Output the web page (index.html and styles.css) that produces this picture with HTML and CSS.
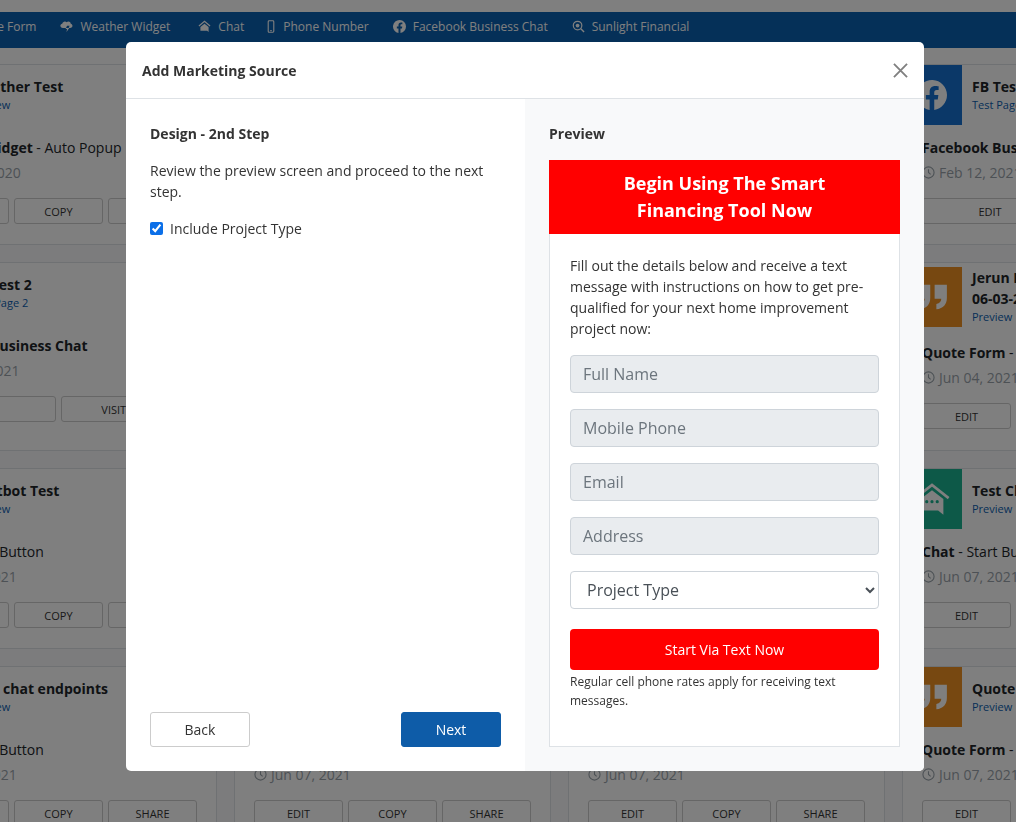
FILE: index.html
```html
<!DOCTYPE html>
<html lang="en">
<head>
    <meta charset="UTF-8">
    <title>Add Marketing Source</title>
    <link rel="stylesheet" href="styles.css">
</head>
<body>
    <svg class="sprite">
        <symbol id="clock" viewBox="0 0 14 14"><circle cx="7" cy="7" r="6" fill="none" stroke="currentColor" stroke-width="1.200"/><path fill="none" stroke="currentColor" stroke-width="1.200" d="M7 3.500V7l2.300 2"/></symbol>
        <symbol id="fb" viewBox="0 0 24 24"><path fill="currentColor" d="M24 12a12 12 0 1 0-13.900 11.900v-8.400H7.100V12h3V9.400c0-3 1.800-4.700 4.500-4.700 1.300 0 2.700.2 2.700.2v3h-1.500c-1.500 0-2 .9-2 1.900V12h3.300l-.5 3.500h-2.800v8.400A12 12 0 0 0 24 12z"/></symbol>
        <symbol id="quote" viewBox="0 0 24 24"><path fill="#fff" d="M4 5h7v7.500c0 3.500-2 6-6 6.500v-3c2 -.4 2.800-1.500 2.800-3H4zm9.500 0h7v7.500c0 3.500-2 6-6 6.500v-3c2-.4 2.800-1.500 2.800-3h-3.800z"/></symbol>
        <symbol id="chat" viewBox="0 0 24 24"><path fill="none" stroke="#fff" stroke-width="1.500" d="M2.500 11.500 12 4l9.500 7.500"/><path fill="#fff" d="M5.500 12 12 7l6.500 5v9l-3-2.500h-10z"/><g fill="#1bb391"><circle cx="9" cy="13.500" r=".9"/><circle cx="12" cy="13.500" r=".9"/><circle cx="15" cy="13.500" r=".9"/></g></symbol>
    </svg>

    <header class="topnav">
        <a class="nav-item">Quote Form</a>
        <a class="nav-item">
            <svg class="nav-icon" viewBox="0 0 14 14"><path fill="currentColor" d="M3.200 8.600C1.400 8.600.4 7.500.4 6.200c0-1.200.9-2.100 2-2.200C2.800 2.600 3.900 1.600 5.300 1.600c.8 0 1.400.3 1.900.7.500-.4 1.100-.6 1.700-.6 1.400 0 2.500 1 2.700 2.300 1 .2 1.800 1.100 1.800 2.200 0 1.400-1 2.400-2.600 2.400H9.300l1-2.400H7.600L6 9.800h1.600L7 13l3-4.400H3.200z"/></svg>
            Weather Widget
        </a>
        <a class="nav-item nav-chat">
            <svg class="nav-icon" viewBox="0 0 14 14"><path fill="none" stroke="currentColor" stroke-width="1.300" d="M1 6.500 7 1.500l6 5"/><path fill="currentColor" d="M2.600 7.500 7 4l4.400 3.500v5.300L9.800 11.500H2.600z"/></svg>
            Chat
        </a>
        <a class="nav-item nav-phone">
            <svg class="nav-icon nav-icon-phone" viewBox="0 0 8 14"><rect x="1" y=".8" width="6" height="12.400" rx="1" fill="none" stroke="currentColor" stroke-width="1.200"/><rect x="3" y="11" width="2" height="1" fill="currentColor"/></svg>
            Phone Number
        </a>
        <a class="nav-item">
            <svg class="nav-icon"><use href="#fb"/></svg>
            Facebook Business Chat
        </a>
        <a class="nav-item">
            <svg class="nav-icon" viewBox="0 0 14 14"><circle cx="6" cy="6" r="4.600" fill="none" stroke="currentColor" stroke-width="1.300"/><circle cx="6" cy="6" r="2" fill="currentColor"/><path stroke="currentColor" stroke-width="1.600" d="m9.500 9.500 3.500 3.500"/></svg>
            Sunlight Financial
        </a>
    </header>

    <main class="card-grid">
        <!-- row 1 -->
        <article class="card">
            <div class="card-head">
                <div class="tile tile-cloud"></div>
                <div class="card-title"><h3>Weather Test</h3><a>Preview</a></div>
            </div>
            <p class="card-type"><b>Weather Widget</b> - Auto Popup</p>
            <p class="card-date"><svg class="clock"><use href="#clock"/></svg> Dec 12, 2020</p>
            <div class="card-actions"><button>EDIT</button><button>COPY</button><button>SHARE</button></div>
        </article>
        <article class="card">
            <div class="card-head">
                <div class="tile tile-quote"><svg><use href="#quote"/></svg></div>
                <div class="card-title"><h3>Quote Test</h3><a>Preview</a></div>
            </div>
            <p class="card-type"><b>Quote Form</b> - Auto Popup</p>
            <p class="card-date"><svg class="clock"><use href="#clock"/></svg> Dec 12, 2020</p>
            <div class="card-actions"><button>EDIT</button><button>COPY</button><button>SHARE</button></div>
        </article>
        <article class="card">
            <div class="card-head">
                <div class="tile tile-quote"><svg><use href="#quote"/></svg></div>
                <div class="card-title"><h3>Quote Test</h3><a>Preview</a></div>
            </div>
            <p class="card-type"><b>Quote Form</b> - Auto Popup</p>
            <p class="card-date"><svg class="clock"><use href="#clock"/></svg> Dec 12, 2020</p>
            <div class="card-actions"><button>EDIT</button><button>COPY</button><button>SHARE</button></div>
        </article>
        <article class="card">
            <div class="card-head">
                <div class="tile tile-fb"><svg class="tile-fb-icon"><use href="#fb"/></svg></div>
                <div class="card-title"><h3>FB Test</h3><a>Test Page</a></div>
            </div>
            <p class="card-type"><b>Facebook Business Chat</b></p>
            <p class="card-date"><svg class="clock"><use href="#clock"/></svg> Feb 12, 2021</p>
            <div class="card-actions"><button>EDIT</button><button>VISIT PAGE</button></div>
        </article>

        <!-- row 2 -->
        <article class="card">
            <div class="card-head">
                <div class="tile tile-fb"><svg class="tile-fb-icon"><use href="#fb"/></svg></div>
                <div class="card-title"><h3>FB Test 2</h3><a>Test Page 2</a></div>
            </div>
            <p class="card-type"><b>Facebook Business Chat</b></p>
            <p class="card-date"><svg class="clock"><use href="#clock"/></svg> Feb 12, 2021</p>
            <div class="card-actions"><button>EDIT</button><button>VISIT PAGE</button></div>
        </article>
        <article class="card">
            <div class="card-head">
                <div class="tile tile-quote"><svg><use href="#quote"/></svg></div>
                <div class="card-title"><h3>Quote Test</h3><a>Preview</a></div>
            </div>
            <p class="card-type"><b>Quote Form</b> - Start Button</p>
            <p class="card-date"><svg class="clock"><use href="#clock"/></svg> Mar 02, 2021</p>
            <div class="card-actions"><button>EDIT</button><button>COPY</button><button>SHARE</button></div>
        </article>
        <article class="card">
            <div class="card-head">
                <div class="tile tile-quote"><svg><use href="#quote"/></svg></div>
                <div class="card-title"><h3>Quote Test</h3><a>Preview</a></div>
            </div>
            <p class="card-type"><b>Quote Form</b> - Start Button</p>
            <p class="card-date"><svg class="clock"><use href="#clock"/></svg> Mar 02, 2021</p>
            <div class="card-actions"><button>EDIT</button><button>COPY</button><button>SHARE</button></div>
        </article>
        <article class="card card-tall">
            <div class="card-head">
                <div class="tile tile-quote"><svg><use href="#quote"/></svg></div>
                <div class="card-title"><h3>Jerun Form<br>06-03-2021</h3><a>Preview</a></div>
            </div>
            <p class="card-type"><b>Quote Form</b> - Auto Popup</p>
            <p class="card-date"><svg class="clock"><use href="#clock"/></svg> Jun 04, 2021</p>
            <div class="card-actions"><button>EDIT</button><button>COPY</button><button>SHARE</button></div>
        </article>

        <!-- row 3 -->
        <article class="card">
            <div class="card-head">
                <div class="tile tile-chat"><svg><use href="#chat"/></svg></div>
                <div class="card-title"><h3>Chatbot Test</h3><a>Preview</a></div>
            </div>
            <p class="card-type"><b>Chat</b> - Start Button</p>
            <p class="card-date"><svg class="clock"><use href="#clock"/></svg> Jun 07, 2021</p>
            <div class="card-actions"><button>EDIT</button><button>COPY</button><button>SHARE</button></div>
        </article>
        <article class="card">
            <div class="card-head">
                <div class="tile tile-chat"><svg><use href="#chat"/></svg></div>
                <div class="card-title"><h3>Chat Test</h3><a>Preview</a></div>
            </div>
            <p class="card-type"><b>Chat</b> - Start Button</p>
            <p class="card-date"><svg class="clock"><use href="#clock"/></svg> Jun 07, 2021</p>
            <div class="card-actions"><button>EDIT</button><button>COPY</button><button>SHARE</button></div>
        </article>
        <article class="card">
            <div class="card-head">
                <div class="tile tile-chat"><svg><use href="#chat"/></svg></div>
                <div class="card-title"><h3>Chat Test</h3><a>Preview</a></div>
            </div>
            <p class="card-type"><b>Chat</b> - Start Button</p>
            <p class="card-date"><svg class="clock"><use href="#clock"/></svg> Jun 07, 2021</p>
            <div class="card-actions"><button>EDIT</button><button>COPY</button><button>SHARE</button></div>
        </article>
        <article class="card">
            <div class="card-head">
                <div class="tile tile-chat"><svg><use href="#chat"/></svg></div>
                <div class="card-title"><h3>Test Chat</h3><a>Preview</a></div>
            </div>
            <p class="card-type"><b>Chat</b> - Start Button</p>
            <p class="card-date"><svg class="clock"><use href="#clock"/></svg> Jun 07, 2021</p>
            <div class="card-actions"><button>EDIT</button><button>COPY</button><button>SHARE</button></div>
        </article>

        <!-- row 4 -->
        <article class="card">
            <div class="card-head">
                <div class="tile tile-chat"><svg><use href="#chat"/></svg></div>
                <div class="card-title"><h3>Test chat endpoints</h3><a>Preview</a></div>
            </div>
            <p class="card-type"><b>Chat</b> - Start Button</p>
            <p class="card-date"><svg class="clock"><use href="#clock"/></svg> Jun 07, 2021</p>
            <div class="card-actions"><button>EDIT</button><button>COPY</button><button>SHARE</button></div>
        </article>
        <article class="card">
            <div class="card-head">
                <div class="tile tile-quote"><svg><use href="#quote"/></svg></div>
                <div class="card-title"><h3>Quote</h3><a>Preview</a></div>
            </div>
            <p class="card-type"><b>Quote Form</b> - Start Button</p>
            <p class="card-date"><svg class="clock"><use href="#clock"/></svg> Jun 07, 2021</p>
            <div class="card-actions"><button>EDIT</button><button>COPY</button><button>SHARE</button></div>
        </article>
        <article class="card">
            <div class="card-head">
                <div class="tile tile-quote"><svg><use href="#quote"/></svg></div>
                <div class="card-title"><h3>Quote</h3><a>Preview</a></div>
            </div>
            <p class="card-type"><b>Quote Form</b> - Start Button</p>
            <p class="card-date"><svg class="clock"><use href="#clock"/></svg> Jun 07, 2021</p>
            <div class="card-actions"><button>EDIT</button><button>COPY</button><button>SHARE</button></div>
        </article>
        <article class="card">
            <div class="card-head">
                <div class="tile tile-quote"><svg><use href="#quote"/></svg></div>
                <div class="card-title"><h3>Quote</h3><a>Preview</a></div>
            </div>
            <p class="card-type"><b>Quote Form</b> - Start Button</p>
            <p class="card-date"><svg class="clock"><use href="#clock"/></svg> Jun 07, 2021</p>
            <div class="card-actions"><button>EDIT</button><button>COPY</button><button>SHARE</button></div>
        </article>
    </main>

    <div class="backdrop"></div>

    <section class="modal">
        <div class="modal-head">
            <h2>Add Marketing Source</h2>
            <svg class="modal-close" viewBox="0 0 16 16"><path stroke="currentColor" stroke-width="2" d="m1 1 14 14M15 1 1 15"/></svg>
        </div>
        <div class="modal-body">
            <div class="step">
                <h4>Design - 2nd Step</h4>
                <p class="step-text">Review the preview screen and proceed to the next step.</p>
                <label class="step-check"><input type="checkbox" checked> Include Project Type</label>
                <div class="step-actions">
                    <button class="btn btn-back">Back</button>
                    <button class="btn btn-next">Next</button>
                </div>
            </div>
            <div class="preview">
                <h4>Preview</h4>
                <div class="preview-card">
                    <div class="preview-banner">Begin Using The Smart<br>Financing Tool Now</div>
                    <div class="preview-form">
                        <p class="preview-intro">Fill out the details below and receive a text message with instructions on how to get pre-qualified for your next home improvement project now:</p>
                        <input class="field" placeholder="Full Name" disabled>
                        <input class="field" placeholder="Mobile Phone" disabled>
                        <input class="field" placeholder="Email" disabled>
                        <input class="field" placeholder="Address" disabled>
                        <select class="field field-select"><option>Project Type</option></select>
                        <button class="btn-start">Start Via Text Now</button>
                        <p class="preview-note">Regular cell phone rates apply for receiving text messages.</p>
                    </div>
                </div>
            </div>
        </div>
    </section>
</body>
</html>
```

FILE: styles.css
```css
* {
    margin: 0;
    padding: 0;
    box-sizing: border-box;
}

html, body {
    height: 100%;
    overflow: hidden;
}

body {
    background: #fff;
    font-family: 'Open Sans', 'Noto Sans', sans-serif;
    font-size: 14px;
    line-height: 21px;
    color: #212529;
    padding-top: 12px;
}

.sprite {
    position: absolute;
    width: 0;
    height: 0;
}

.topnav {
    background: #0b60b0;
    height: 36px;
    margin-left: -31px;
    padding-bottom: 7px;
    width: 1200px;
    display: flex;
    align-items: center;
    gap: 24px;
}

.nav-item {
    color: #fff;
    font-size: 12px;
    display: flex;
    align-items: center;
    gap: 7px;
    white-space: nowrap;
}

.nav-chat {
    margin-left: 4px;
}

.nav-phone {
    margin-left: -1px;
    gap: 8px;
}

.nav-icon {
    width: 13px;
    height: 13px;
    flex: none;
}

.nav-icon-phone {
    width: 8px;
}

.card-grid {
    display: grid;
    grid-template-columns: repeat(4, 317px);
    gap: 17px;
    margin: 16px 0 0 -100px;
    width: 1400px;
    background: #f8f9fa;
}

.card {
    background: #fff;
    border: 1px solid #dee2e6;
    padding-bottom: 20px;
}

.card-tall {
    padding-bottom: 21px;
}

.card-head {
    display: flex;
    align-items: center;
    gap: 10px;
}

.tile {
    width: 60px;
    height: 60px;
    margin-left: -1px;
    flex: none;
    display: flex;
    align-items: center;
    justify-content: center;
}

.tile svg {
    width: 42px;
    height: 42px;
}

.tile .tile-fb-icon {
    width: 30px;
    height: 30px;
    color: #fff;
}

.tile-fb {
    background: #1670d0;
}

.tile-quote {
    background: #ee9022;
}

.tile-chat {
    background: #1bb391;
}

.tile-cloud {
    background: #33a0d8;
}

.card-title {
    padding: 4px 0 5px;
}

.card-title h3 {
    font-size: 14px;
    font-weight: 700;
}

.card-title a {
    display: block;
    font-size: 11px;
    line-height: 16px;
    color: #0b60b0;
}

.card-type {
    margin: 12px 19px 0;
    white-space: nowrap;
}

.card-date {
    margin: 4px 19px 0;
    color: #9aa3ab;
    display: flex;
    align-items: center;
    gap: 4px;
}

.clock {
    width: 13px;
    height: 13px;
}

.card-actions {
    display: flex;
    gap: 5px;
    margin: 15px 19px 0;
}

.card-actions button {
    flex: 1;
    height: 26px;
    background: #fff;
    border: 1px solid #ccc;
    border-radius: 3px;
    font-family: inherit;
    font-size: 11px;
    color: #333;
}

.backdrop {
    position: fixed;
    inset: 0;
    background: rgba(0, 0, 0, 0.5);
}

.modal {
    position: absolute;
    left: 126px;
    top: 42px;
    width: 798px;
    height: 729px;
    background: #fff;
    border-radius: 5px;
    overflow: hidden;
    display: flex;
    flex-direction: column;
}

.modal-head {
    height: 57px;
    flex: none;
    padding: 0 16px;
    border-bottom: 1px solid #dee2e6;
    display: flex;
    align-items: center;
    justify-content: space-between;
}

.modal-head h2 {
    font-size: 14px;
    font-weight: 700;
    color: #333;
}

.modal-close {
    width: 15px;
    height: 15px;
    color: #808080;
}

.modal-body {
    flex: 1;
    display: flex;
}

.step, .preview {
    width: 50%;
    padding: 24px;
}

.step {
    display: flex;
    flex-direction: column;
}

.preview {
    background: #f8f9fa;
}

h4 {
    font-size: 14px;
    font-weight: 700;
    color: #333;
}

.step-text {
    margin-top: 16px;
    color: #333;
}

.step-check {
    margin-top: 16px;
    display: flex;
    align-items: center;
    gap: 7px;
    color: #333;
}

.step-check input {
    width: 13px;
    height: 13px;
    accent-color: #0b6fe8;
}

.step-actions {
    margin-top: auto;
    display: flex;
    justify-content: space-between;
}

.btn {
    width: 100px;
    height: 35px;
    border-radius: 3px;
    font-family: inherit;
    font-size: 14px;
}

.btn-back {
    background: #fff;
    border: 1px solid #ccc;
    color: #333;
}

.btn-next {
    background: #0e5ca8;
    border: 1px solid #0e5ca8;
    color: #fff;
}

.preview-card {
    margin-top: 16px;
    background: #fff;
    border: 1px solid #dee2e6;
    height: 587px;
}

.preview-banner {
    margin: -1px -1px 0;
    background: #f00;
    color: #fff;
    font-size: 18px;
    font-weight: 700;
    line-height: 27px;
    text-align: center;
    padding: 10px 20px;
}

.preview-form {
    padding: 21px 20px;
    display: flex;
    flex-direction: column;
}

.preview-intro {
    color: #333;
    margin-bottom: 16px;
}

.field {
    height: 38px;
    width: 100%;
    margin-bottom: 16px;
    padding: 0 12px;
    border: 1px solid #ced4da;
    border-radius: 4px;
    background: #e9ecef;
    font-family: inherit;
    font-size: 16px;
    color: #495057;
}

.field::placeholder {
    color: #6c757d;
    opacity: 1;
}

.field-select {
    background: #fff;
    margin-bottom: 20px;
}

.btn-start {
    height: 41px;
    background: #f00;
    border: none;
    border-radius: 4px;
    color: #fff;
    font-family: inherit;
    font-size: 14px;
}

.preview-note {
    margin-top: 2px;
    font-size: 12px;
    line-height: 19px;
    color: #333;
}
```
